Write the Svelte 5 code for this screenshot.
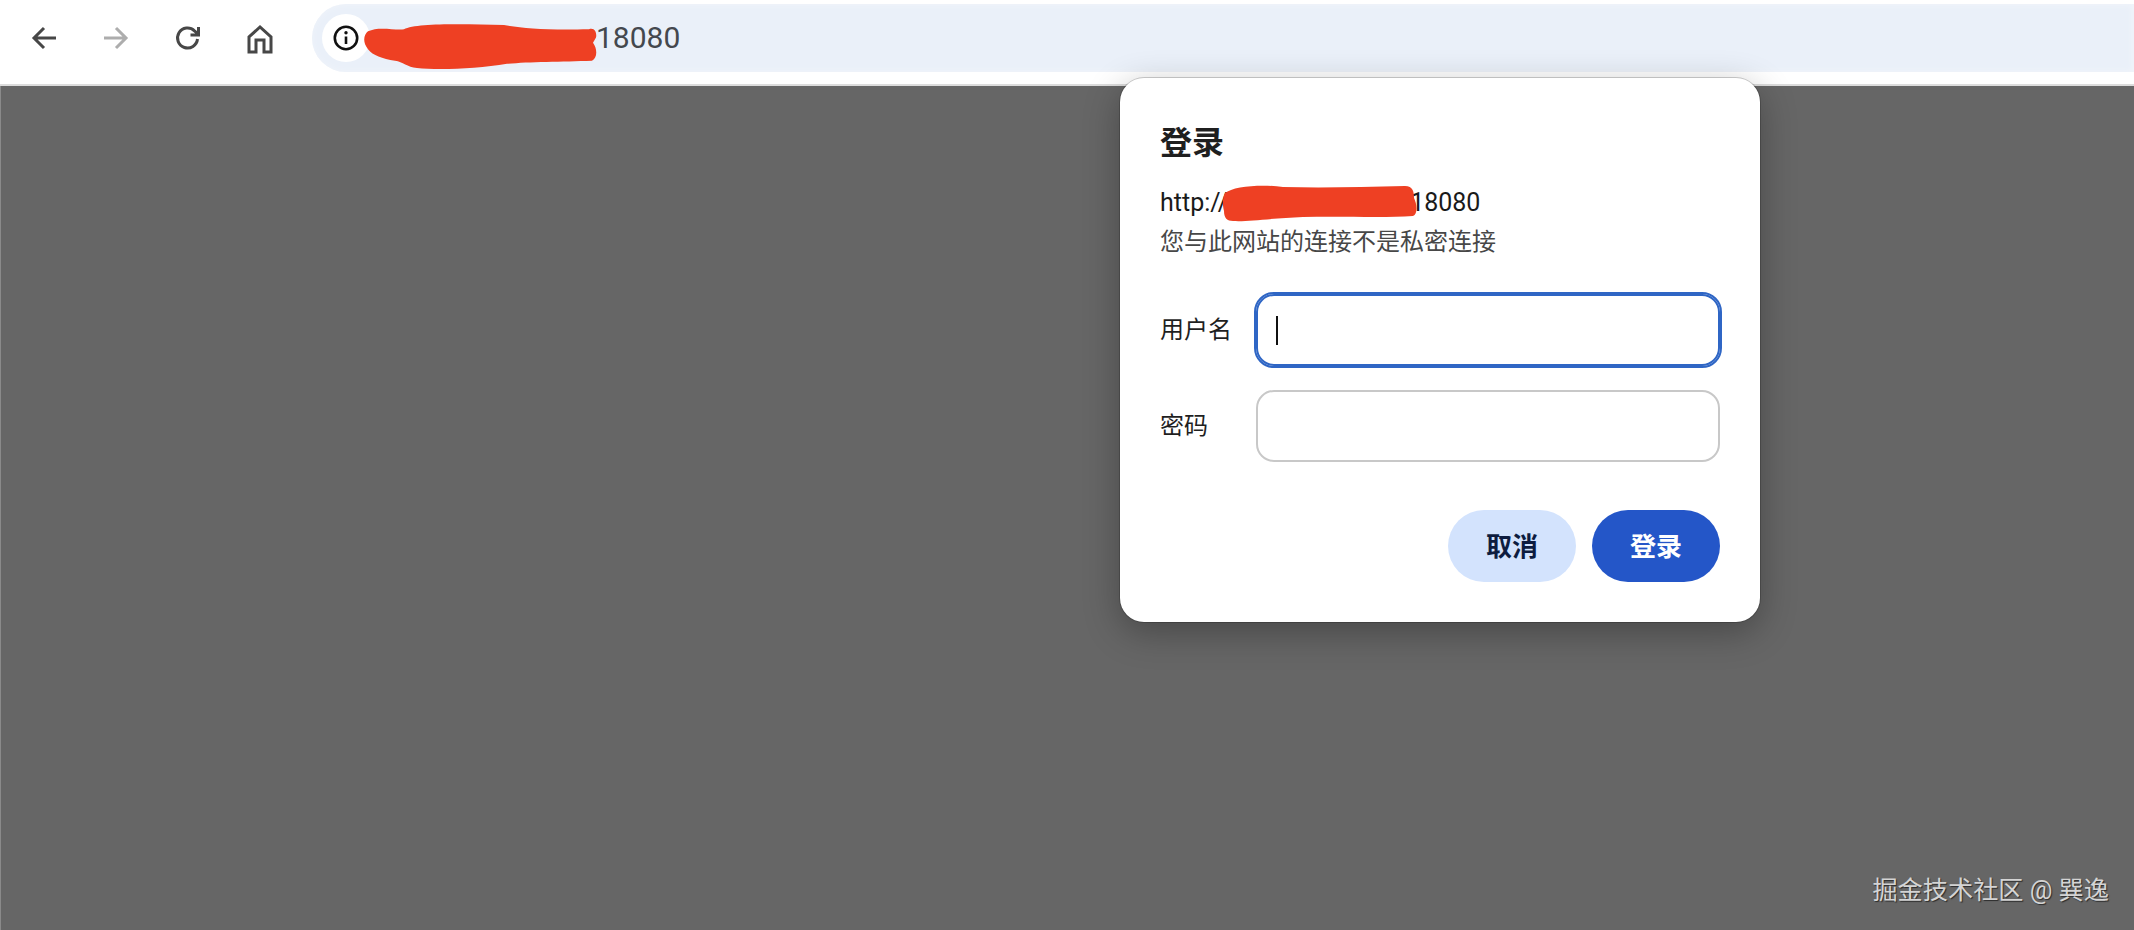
<script>
  const fields = [
    { label: '用户名', focused: true },
    { label: '密码', focused: false }
  ];
</script>

<div class="page">
  <header class="toolbar">
    <nav class="nav">
      <svg class="icon" viewBox="0 0 24 24"><path d="M24 12H2M12 2 2 12l10 10" /></svg>
      <svg class="icon off" viewBox="0 0 24 24"><path d="M0 12h22M12 2l10 10-10 10" /></svg>
      <svg class="icon" viewBox="0 0 24 24"><path d="M21.5 13a10 10 0 1 1-3-8.2L22 8M22.500 1v8h-8" /></svg>
      <svg class="icon" viewBox="0 0 24 24"><path d="M1 26V11L12 1l11 10v15h-7V14H8v12z" /></svg>
    </nav>
    <div class="omnibox">
      <span class="chip">
        <svg viewBox="0 0 26 26" class="info">
          <circle cx="13" cy="13" r="11.200" />
          <path d="M13 11.500v7.500" />
          <circle class="dot" cx="13" cy="7.800" r="1.700" />
        </svg>
      </span>
      <span class="redact bar-redact">
        <svg viewBox="0 0 234 42" preserveAspectRatio="none">
          <path d="M4 7C14 2 30 6 40 5 52-1 100 0 140 1c20 3 40 5 85 4 6-2 8 4 7 8l-3 5c4 5 5 14-1 17-30 1-65 1-85 3-30 5-70 6-90 4-10-1-14-6-22-7C18 33 9 30 4 24-2 17 0 10 4 7z" />
        </svg>
      </span>
      <span class="port">18080</span>
    </div>
  </header>

  <main class="content">
    <section class="dialog">
      <h1>登录</h1>
      <p class="url"><span>http://</span><span class="redact dialog-redact">
        <svg viewBox="0 0 194 36" preserveAspectRatio="none">
          <path d="M2 8C10 1 40-1 60 2c40 1 80 0 122-1 8 0 9 6 9 12 3 6 4 16-1 18-30 2-70 0-110 1-30 1-55 5-70 4C4 36 1 33 1 26-1 18 0 12 2 8z" />
        </svg>
      </span><span>18080</span></p>
      <p class="note">您与此网站的连接不是私密连接</p>

      <div class="form">
        {#each fields as f}
          <div class="row">
            <span class="label">{f.label}</span>
            <div class="field" class:focused={f.focused}>
              {#if f.focused}<span class="caret"></span>{/if}
            </div>
          </div>
        {/each}
      </div>

      <div class="actions">
        <button class="btn cancel">取消</button>
        <button class="btn ok">登录</button>
      </div>
    </section>

    <div class="mark">掘金技术社区 @ 巽逸</div>
  </main>
</div>

<style>
  :global(body) {
    margin: 0;
    background: #666;
    font-family: Roboto, "Noto Sans CJK SC", sans-serif;
  }
  .page {
    width: 2134px;
    height: 930px;
    display: flex;
    flex-direction: column;
    overflow: hidden;
  }
  .toolbar {
    flex: none;
    background: #fff;
    border-bottom: 2px solid #dcdcdc;
    display: flex;
    align-items: flex-start;
    padding-left: 32px;
    padding-top: 4px;
    height: 80px;
  }
  .nav {
    display: flex;
    gap: 48px;
    width: 280px;
    flex: none;
    padding-top: 22px;
  }
  .icon {
    width: 24px;
    height: 24px;
    overflow: visible;
    fill: none;
    stroke: #474747;
    stroke-width: 3;
  }
  .icon.off {
    stroke: #adadad;
  }
  .omnibox {
    flex: 1;
    height: 68px;
    background: #eaf0f9;
    border-radius: 34px 0 0 34px;
    display: flex;
    align-items: center;
    padding-left: 10px;
    box-shadow: -1px 0 6px #f2f5fa inset;
  }
  .chip {
    width: 48px;
    height: 48px;
    border-radius: 50%;
    background: #fff;
    display: flex;
    align-items: center;
    justify-content: center;
    flex: none;
  }
  .info {
    width: 26px;
    height: 26px;
    fill: none;
    stroke: #111;
    stroke-width: 2.600;
  }
  .info .dot {
    fill: #111;
    stroke: none;
  }
  .redact {
    position: relative;
    display: inline-block;
    flex: none;
  }
  .redact svg {
    position: absolute;
    left: 0;
    display: block;
    overflow: visible;
    fill: #ee4023;
  }
  .bar-redact {
    width: 232px;
    height: 42px;
    margin-left: -6px;
    margin-top: 18px;
  }
  .bar-redact svg {
    top: -2px;
    width: 234px;
    height: 44px;
  }
  .port {
    font-size: 30px;
    color: #44484e;
    padding-bottom: 2px;
  }
  .content {
    position: relative;
    flex: 1;
    background: #666;
    border-left: 1px solid #8a8a8a;
  }
  .dialog {
    position: absolute;
    left: 1119px;
    top: -8px;
    width: 640px;
    height: 544px;
    box-sizing: border-box;
    padding: 45px 40px 40px;
    background: #fff;
    border-radius: 24px;
    box-shadow: 0 0 0 1px rgba(0, 0, 0, 0.18), 0 10px 36px rgba(0, 0, 0, 0.3);
    display: flex;
    flex-direction: column;
  }
  h1 {
    margin: 0 0 19px;
    font-size: 32px;
    line-height: 40px;
    font-weight: 700;
    color: #1f1f1f;
  }
  .url,
  .note {
    margin: 0;
    font-size: 24px;
    line-height: 40px;
    white-space: nowrap;
  }
  .url {
    font-size: 25px;
    color: #1a1a1a;
    display: flex;
    padding-top: 1px;
    height: 39px;
  }
  .note {
    color: #474747;
  }
  .dialog-redact {
    width: 187px;
    height: 40px;
    margin-left: -5px;
  }
  .dialog-redact svg {
    top: 2px;
    width: 194px;
    height: 36px;
  }
  .form {
    margin-top: 32px;
    display: flex;
    flex-direction: column;
    gap: 24px;
  }
  .row {
    display: flex;
    align-items: center;
  }
  .label {
    width: 96px;
    flex: none;
    font-size: 24px;
    color: #1f1f1f;
    padding-bottom: 5px;
  }
  .field {
    flex: 1;
    height: 72px;
    box-sizing: border-box;
    border: 2px solid #c8c8c8;
    border-radius: 18px;
    background: #fff;
    display: flex;
    align-items: center;
    padding-left: 18px;
  }
  .field.focused {
    border-color: #2f66c5;
    outline: 2px solid #2f66c5;
  }
  .caret {
    width: 2px;
    height: 29px;
    background: #111;
  }
  .actions {
    margin-top: 48px;
    display: flex;
    justify-content: flex-end;
    gap: 16px;
  }
  .btn {
    width: 128px;
    height: 72px;
    border: 0;
    border-radius: 36px;
    padding: 0 0 4px;
    font: 700 26px Roboto, "Noto Sans CJK SC", sans-serif;
  }
  .cancel {
    background: #d3e3fd;
    color: #0d1c3f;
  }
  .ok {
    background: #2456c8;
    color: #fff;
  }
  .mark {
    position: absolute;
    right: 25px;
    bottom: 22px;
    font-size: 25.200px;
    line-height: 34px;
    color: #d4d4d4;
    text-shadow: 1px 1px 1px #2c2c2c;
    white-space: nowrap;
  }
</style>
